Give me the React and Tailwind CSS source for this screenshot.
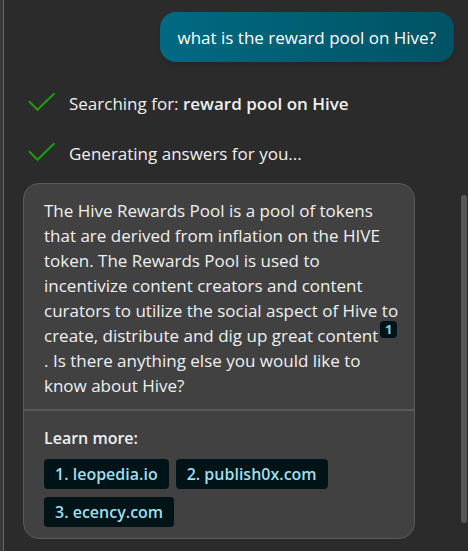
import React from 'react';

// Sources listed under the answer
const sources = ['leopedia.io', 'publish0x.com', 'ecency.com'];

// Green tick in front of each finished step
const CheckMark = () => (
  <svg
    className="w-7 h-5 shrink-0"
    viewBox="0 0 28 20"
    fill="none"
    stroke="#13a10e"
    strokeWidth="2"
    strokeLinecap="round"
    aria-hidden="true"
  >
    <path d="M1.5 8.8 L9.5 16.8 L26 0.8" />
  </svg>
);

const Step = ({ children }) => (
  <li className="flex items-center gap-[13px] h-[50px]">
    <CheckMark />
    <span>{children}</span>
  </li>
);

// Answer card with the list of links at the bottom
const Answer = () => (
  <article className="mt-[5px] mr-[46px] rounded-2xl border border-[#5a5a5a] bg-[#414141]">
    <p className="pl-5 pr-[14px] pt-[14px] pb-[11px]">
      The Hive Rewards Pool is a pool of tokens that are derived from inflation on the HIVE
      token. The Rewards Pool is used to incentivize content creators and content curators to
      utilize the social aspect of Hive to create, distribute and dig up great content
      <sup className="ml-0.5 align-[2px] text-xs leading-none">
        <a
          href="#source-1"
          className="inline-block w-[17px] h-[17px] rounded bg-[#001317] text-center text-[13px] leading-[17px] font-bold text-[#7fd6ee]"
        >
          1
        </a>
      </sup>{' '}
      . Is there anything else you would like to know about Hive?
    </p>
    <div className="border-t-2 border-[#5a5a5a] px-5 pt-[15px] pb-[11px]">
      <h2 className="text-base leading-[25px] font-semibold">Learn more:</h2>
      <ul className="mt-2 flex flex-wrap gap-x-[7px] gap-y-2 text-base">
        {sources.map((source, index) => (
          <li key={source} id={`source-${index + 1}`}>
            <a
              href={`https://${source}`}
              className="block h-[30px] rounded bg-[#001317] px-[11px] leading-[30px] font-semibold text-[#9edfef]"
            >
              {index + 1}. {source}
            </a>
          </li>
        ))}
      </ul>
    </div>
  </article>
);

export default function App() {
  return (
    <div className="flex min-h-screen border-l-3 border-[#383838] bg-[#2b2b2b] font-['Open_Sans','Noto_Sans',sans-serif] text-[17px] leading-[25px] text-[#f0f0f0]">
      <main className="min-w-0 flex-1 border-l border-[#666666] pl-[19px] pt-3 pb-3">
        <div className="ml-auto mr-[7px] w-fit rounded-2xl bg-linear-to-r from-[#006a83] to-[#005263] px-[18px] pt-[13px] pb-3 text-white shadow-md">
          what is the reward pool on Hive?
        </div>
        <ul className="mt-4 pl-[5px]">
          <Step>
            Searching for: <b className="font-semibold">reward pool on Hive</b>
          </Step>
          <Step>Generating answers for you...</Step>
        </ul>
        <Answer />
      </main>
      {/* Scroll bar thumb */}
      <div className="flex flex-col w-[7px] pt-[195px] pb-7">
        <div className="w-[6px] flex-1 rounded-full bg-[#575757]" />
      </div>
    </div>
  );
}
